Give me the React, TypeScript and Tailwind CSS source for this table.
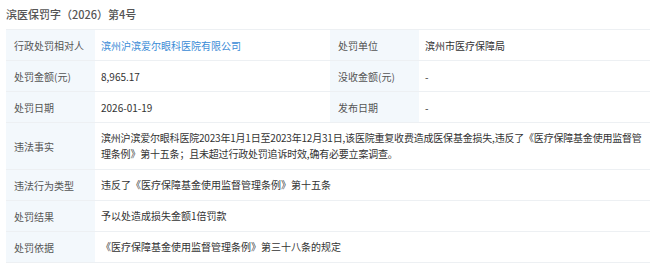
const font = { fontFamily: '"Noto Sans CJK SC", "Noto Sans", sans-serif' };

type Cell = { label: string; value: React.ReactNode; label2?: string; value2?: string; tall?: boolean };

const rows: Cell[] = [
  {
    label: "行政处罚相对人",
    value: <span className="text-[#3a8bd6]">滨州沪滨爱尔眼科医院有限公司</span>,
    label2: "处罚单位",
    value2: "滨州市医疗保障局",
  },
  { label: "处罚金额(元)", value: "8,965.17", label2: "没收金额(元)", value2: "-" },
  { label: "处罚日期", value: "2026-01-19", label2: "发布日期", value2: "-" },
  {
    label: "违法事实",
    value:
      "滨州沪滨爱尔眼科医院2023年1月1日至2023年12月31日,该医院重复收费造成医保基金损失,违反了《医疗保障基金使用监督管理条例》第十五条；且未超过行政处罚追诉时效,确有必要立案调查。",
    tall: true,
  },
  { label: "违法行为类型", value: "违反了《医疗保障基金使用监督管理条例》第十五条" },
  { label: "处罚结果", value: "予以处造成损失金额1倍罚款" },
  { label: "处罚依据", value: "《医疗保障基金使用监督管理条例》第三十八条的规定" },
];

export default function App() {
  return (
    <div className="h-[270px] w-[650px] overflow-hidden bg-white pl-[6px]" style={font}>
      <div className="flex h-[29px] items-center text-[11px] font-medium text-[#555]">
        滨医保罚字（2026）第4号
      </div>
      <div className="grid w-[644px] grid-cols-[89px_235px_89px_1fr] border-t border-[#edf0f3] text-[10px]">
        {rows.map((r) => (
          <div key={r.label} className="contents">
            <div
              className={`flex items-center border-b border-[#edf0f3] bg-[#f3f8fc] pl-2 text-[#555] ${
                r.tall ? "h-[47px]" : "h-[31px]"
              }`}
            >
              {r.label}
            </div>
            {r.label2 ? (
              <>
                <div className="flex items-center border-b border-[#edf0f3] pl-[6px] text-[#333]">{r.value}</div>
                <div className="flex items-center border-b border-[#edf0f3] bg-[#f3f8fc] pl-2 text-[#555]">
                  {r.label2}
                </div>
                <div className="flex items-center border-b border-[#edf0f3] pl-[6px] text-[#333]">{r.value2}</div>
              </>
            ) : (
              <div
                className={`col-span-3 flex items-center border-b border-[#edf0f3] pl-[6px] leading-[16px] text-[#333] ${
                  r.tall ? "tracking-[-0.2px]" : ""
                }`}
              >
                {r.value}
              </div>
            )}
          </div>
        ))}
      </div>
    </div>
  );
}
